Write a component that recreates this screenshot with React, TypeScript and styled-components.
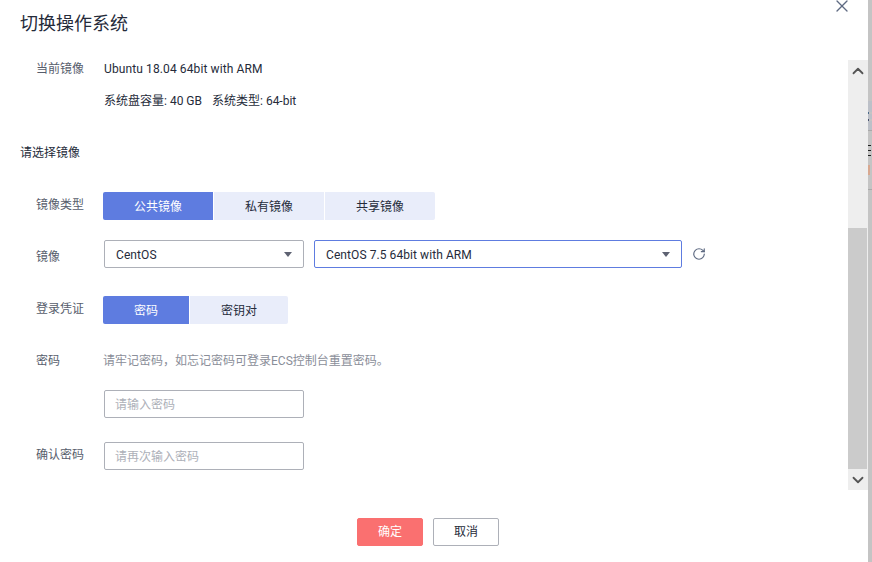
import React from 'react';
import styled, { createGlobalStyle } from 'styled-components';
import { X, RotateCw, ChevronUp, ChevronDown } from 'lucide-react';

const GlobalStyle = createGlobalStyle`
  html, body {
    margin: 0;
    padding: 0;
    background: #fff;
    overflow: hidden;
  }
  * {
    box-sizing: border-box;
  }
`;

const Page = styled.div`
  display: flex;
  width: 872px;
  height: 562px;
  overflow: hidden;
  font-family: Roboto, 'Noto Sans CJK SC', sans-serif;
  font-size: 12px;
  color: #252b3a;
`;

const Dialog = styled.div`
  position: relative;
  display: flex;
  flex-direction: column;
  width: 868px;
  height: 562px;
  background: #fff;
`;

const Backdrop = styled.div`
  display: flex;
  flex-direction: column;
  width: 4px;
  background: #c4c4c4;
`;

const BackdropBit = styled.div<{ $h: number; $color: string; $top?: number; $w?: number }>`
  width: ${(p) => p.$w ?? 4}px;
  height: ${(p) => p.$h}px;
  margin-top: ${(p) => p.$top ?? 0}px;
  background: ${(p) => p.$color};
`;

const CloseButton = styled.div`
  position: absolute;
  top: -4px;
  left: 832px;
  display: flex;
  color: #5e6a82;
`;

const Title = styled.h2`
  margin: 0;
  padding: 11px 0 0 20px;
  height: 60px;
  font-size: 18px;
  font-weight: 400;
  line-height: 26px;
  color: #252b3a;
`;

const Main = styled.div`
  display: flex;
  height: 430px;
`;

const Form = styled.div`
  display: flex;
  flex-direction: column;
  width: 848px;
`;

const Row = styled.div<{ $h: number }>`
  display: flex;
  align-items: flex-start;
  height: ${(p) => p.$h}px;
  padding-left: 36px;
`;

const Label = styled.div<{ $up?: number }>`
  flex: none;
  width: 68px;
  line-height: 18px;
  color: #575d6c;
  transform: translateY(${(p) => p.$up ?? 0}px);
`;

const Value = styled.div`
  line-height: 18px;
  color: #252b3a;
`;

const ImageName = styled(Value)`
  letter-spacing: 0.11px;
`;

const Gap = styled.span`
  display: inline-block;
  width: 10px;
`;

const SectionTitle = styled.div`
  height: 48px;
  padding-left: 20px;
  line-height: 18px;
  color: #252b3a;
`;

const Tabs = styled.div`
  display: flex;
  gap: 1px;
  margin-left: -1px;
`;

const Tab = styled.div<{ $active?: boolean; $w: number }>`
  width: ${(p) => p.$w}px;
  height: 28px;
  line-height: 30px;
  text-align: center;
  background: ${(p) => (p.$active ? '#5e7ce0' : '#e9edfa')};
  color: ${(p) => (p.$active ? '#fff' : '#252b3a')};
  &:first-child {
    border-radius: 2px 0 0 2px;
  }
  &:last-child {
    border-radius: 0 2px 2px 0;
  }
`;

const Select = styled.div<{ $w: number; $focused?: boolean }>`
  display: flex;
  align-items: center;
  justify-content: space-between;
  width: ${(p) => p.$w}px;
  height: 28px;
  margin-right: 10px;
  padding: 1px 11px 0;
  border: 1px solid ${(p) => (p.$focused ? '#5e7ce0' : '#adb0b8')};
  border-radius: 2px;
  color: #252b3a;
  letter-spacing: 0.08px;
`;

const Caret = styled.span`
  width: 0;
  height: 0;
  border-left: 4px solid transparent;
  border-right: 4px solid transparent;
  border-top: 5px solid #5e6272;
`;

const Refresh = styled.div`
  display: flex;
  padding-top: 7px;
  color: #5e6a82;
`;

const Hint = styled.div`
  margin-left: -1px;
  line-height: 18px;
  color: #8a8e99;
`;

const Input = styled.input`
  display: block;
  width: 200px;
  height: 28px;
  padding: 2px 10px 0;
  border: 1px solid #adb0b8;
  border-radius: 2px;
  outline: none;
  font: inherit;
  color: #252b3a;
  &::placeholder {
    color: #adb0b8;
    opacity: 1;
  }
`;

const Scrollbar = styled.div`
  display: flex;
  flex-direction: column;
  width: 20px;
  background: #eeeeee;
`;

const ScrollStep = styled.div`
  display: flex;
  align-items: center;
  justify-content: center;
  height: 21px;
  color: #555;
`;

const Track = styled.div`
  flex: 1;
  display: flex;
  flex-direction: column;
  justify-content: flex-end;
`;

const Thumb = styled.div`
  width: 19px;
  height: 241px;
  background: #cbcbcb;
`;

const Footer = styled.div`
  display: flex;
  justify-content: center;
  gap: 10px;
  padding-top: 28px;
  padding-right: 12px;
`;

const Button = styled.div<{ $primary?: boolean }>`
  width: 66px;
  height: 28px;
  line-height: 26px;
  text-align: center;
  border-radius: 2px;
  background: ${(p) => (p.$primary ? '#fa7070' : '#fff')};
  color: ${(p) => (p.$primary ? '#fff' : '#252b3a')};
  border: 1px solid ${(p) => (p.$primary ? '#fa7070' : '#adb0b8')};
`;

export default function App() {
  return (
    <Page>
      <GlobalStyle />
      <Dialog>
        <CloseButton>
          <X size={20} strokeWidth={1.6} />
        </CloseButton>
        <Title>切换操作系统</Title>
        <Main>
          <Form>
            <Row $h={32}>
              <Label>当前镜像</Label>
              <ImageName>Ubuntu 18.04 64bit with ARM</ImageName>
            </Row>
            <Row $h={52}>
              <Label />
              <Value>
                系统盘容量: 40 GB<Gap />系统类型: 64-bit
              </Value>
            </Row>
            <SectionTitle>请选择镜像</SectionTitle>
            <Row $h={48}>
              <Label $up={4}>镜像类型</Label>
              <Tabs>
                <Tab $active $w={110}>公共镜像</Tab>
                <Tab $w={110}>私有镜像</Tab>
                <Tab $w={110}>共享镜像</Tab>
              </Tabs>
            </Row>
            <Row $h={56}>
              <Label $up={8}>镜像</Label>
              <Select $w={200}>
                CentOS
                <Caret />
              </Select>
              <Select $w={368} $focused>
                CentOS 7.5 64bit with ARM
                <Caret />
              </Select>
              <Refresh>
                <RotateCw size={14} strokeWidth={2} />
              </Refresh>
            </Row>
            <Row $h={56}>
              <Label $up={4}>登录凭证</Label>
              <Tabs>
                <Tab $active $w={86}>密码</Tab>
                <Tab $w={98}>密钥对</Tab>
              </Tabs>
            </Row>
            <Row $h={38}>
              <Label>密码</Label>
              <Hint>请牢记密码，如忘记密码可登录ECS控制台重置密码。</Hint>
            </Row>
            <Row $h={52}>
              <Label />
              <Input placeholder="请输入密码" />
            </Row>
            <Row $h={28}>
              <Label $up={4}>确认密码</Label>
              <Input placeholder="请再次输入密码" />
            </Row>
          </Form>
          <Scrollbar>
            <ScrollStep>
              <ChevronUp size={18} strokeWidth={2.4} />
            </ScrollStep>
            <Track>
              <Thumb />
            </Track>
            <ScrollStep>
              <ChevronDown size={18} strokeWidth={2.4} />
            </ScrollStep>
          </Scrollbar>
        </Main>
        <Footer>
          <Button $primary>确定</Button>
          <Button>取消</Button>
        </Footer>
      </Dialog>
      <Backdrop>
        <BackdropBit $h={11} $color="#bcc0c8" $top={101} />
        <BackdropBit $h={2} $color="#4a6a8a" $w={1} />
        <BackdropBit $h={5} $color="#bcc0c8" />
        <BackdropBit $h={2} $color="#44506e" $w={1} />
        <BackdropBit $h={9} $color="#bcc0c8" />
        <BackdropBit $h={1} $color="#a9a9a9" />
        <BackdropBit $h={1} $color="#222222" $top={14} $w={3} />
        <BackdropBit $h={1} $color="#222222" $top={4} $w={3} />
        <BackdropBit $h={1} $color="#222222" $top={4} $w={3} />
        <BackdropBit $h={10} $color="#d8a890" $top={9} $w={2} />
        <BackdropBit $h={1} $color="#a9a9a9" $top={14} />
      </Backdrop>
    </Page>
  );
}
